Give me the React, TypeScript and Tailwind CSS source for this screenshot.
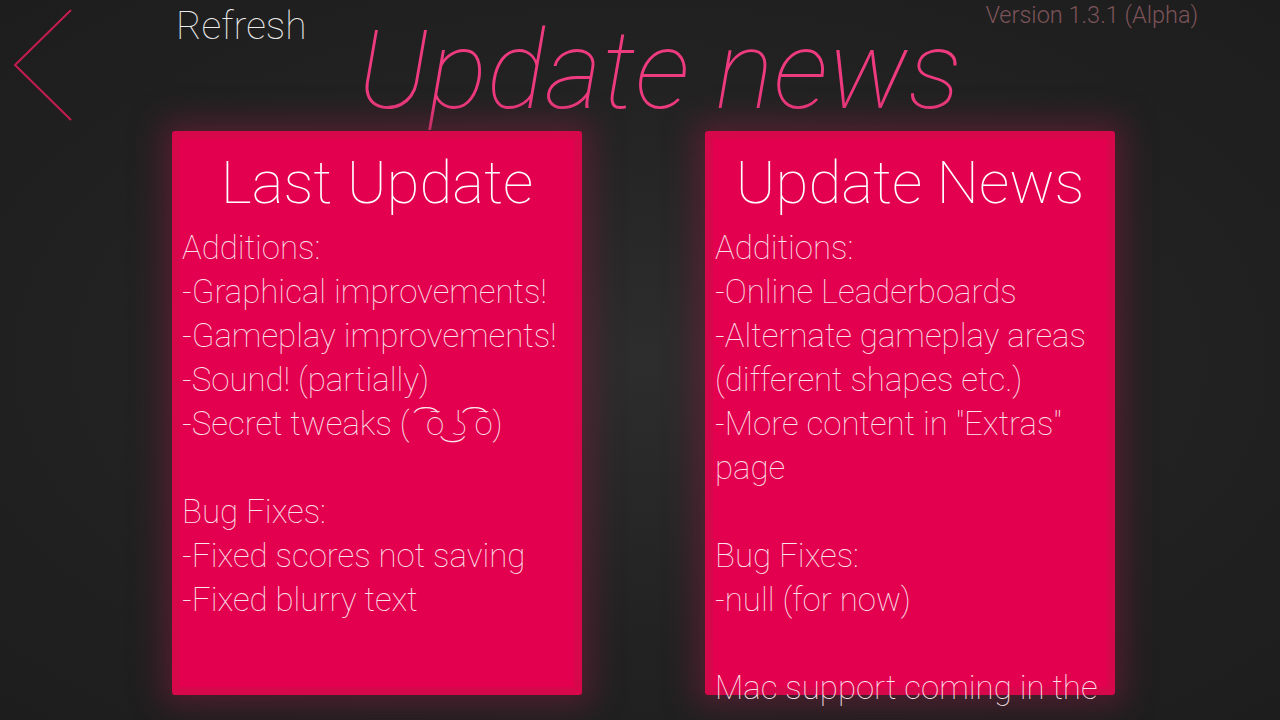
const lastUpdate = [
  'Additions:',
  '-Graphical improvements!',
  '-Gameplay improvements!',
  '-Sound! (partially)',
  '-Secret tweaks (  ͡ō ͜ʖ ͡ō)',
  '',
  'Bug Fixes:',
  '-Fixed scores not saving',
  '-Fixed blurry text',
];

const updateNews = [
  'Additions:',
  '-Online Leaderboards',
  '-Alternate gameplay areas',
  '(different shapes etc.)',
  '-More content in "Extras"',
  'page',
  '',
  'Bug Fixes:',
  '-null (for now)',
  '',
  'Mac support coming in the',
];

function Card({ title, lines }: { title: string; lines: string[] }) {
  return (
    <div className="w-[410px] h-[564px] bg-[#d6084b] p-[8px] rounded-[3px] shadow-[0_0_30px_10px_rgba(120,30,60,0.55)]">
      <div className="h-full bg-[#e2004f] relative">
        <div className="absolute -left-[8px] -top-[8px] w-[410px] pt-[16px]">
          <h2 className="text-center text-[60px] leading-[72px] font-thin text-white">{title}</h2>
          <div className="mt-[7px] pl-[10px] text-[33px] leading-[44px] font-thin text-[#fbe4ec] whitespace-pre">
            {lines.map((l, i) => (
              <div key={i} className="h-[44px]">
                {l}
              </div>
            ))}
          </div>
        </div>
      </div>
    </div>
  );
}

export default function App() {
  return (
    <div
      className="w-[1280px] h-[720px] overflow-hidden antialiased bg-[radial-gradient(ellipse_at_center,#2d2d2d_0%,#222222_55%,#1d1d1d_100%)]"
      style={{ fontFamily: 'Roboto, "Noto Sans", "DejaVu Sans", sans-serif' }}
    >
      <header className="h-[131px] flex items-start">
        <svg width="80" height="130" viewBox="0 0 80 130" className="ml-[10px] mt-[4px] shrink-0">
          <polyline points="61,6 5,61 61,116" fill="none" stroke="#c41c4e" strokeWidth="2" />
        </svg>
        <div className="ml-[86px] mt-[4px] text-[39px] leading-[44px] font-thin text-[#ececec]">Refresh</div>
        <h1 className="ml-[51px] mt-[12px] text-[110px] leading-[118px] font-thin italic text-[#ee3a7f]">
          Update news
        </h1>
        <div className="ml-[24px] mt-[1px] text-[23.5px] leading-[28px] font-light text-[#7c5359]">Version 1.3.1 (Alpha)</div>
      </header>
      <main className="flex gap-[123px] pl-[172px]">
        <Card title="Last Update" lines={lastUpdate} />
        <Card title="Update News" lines={updateNews} />
      </main>
    </div>
  );
}
